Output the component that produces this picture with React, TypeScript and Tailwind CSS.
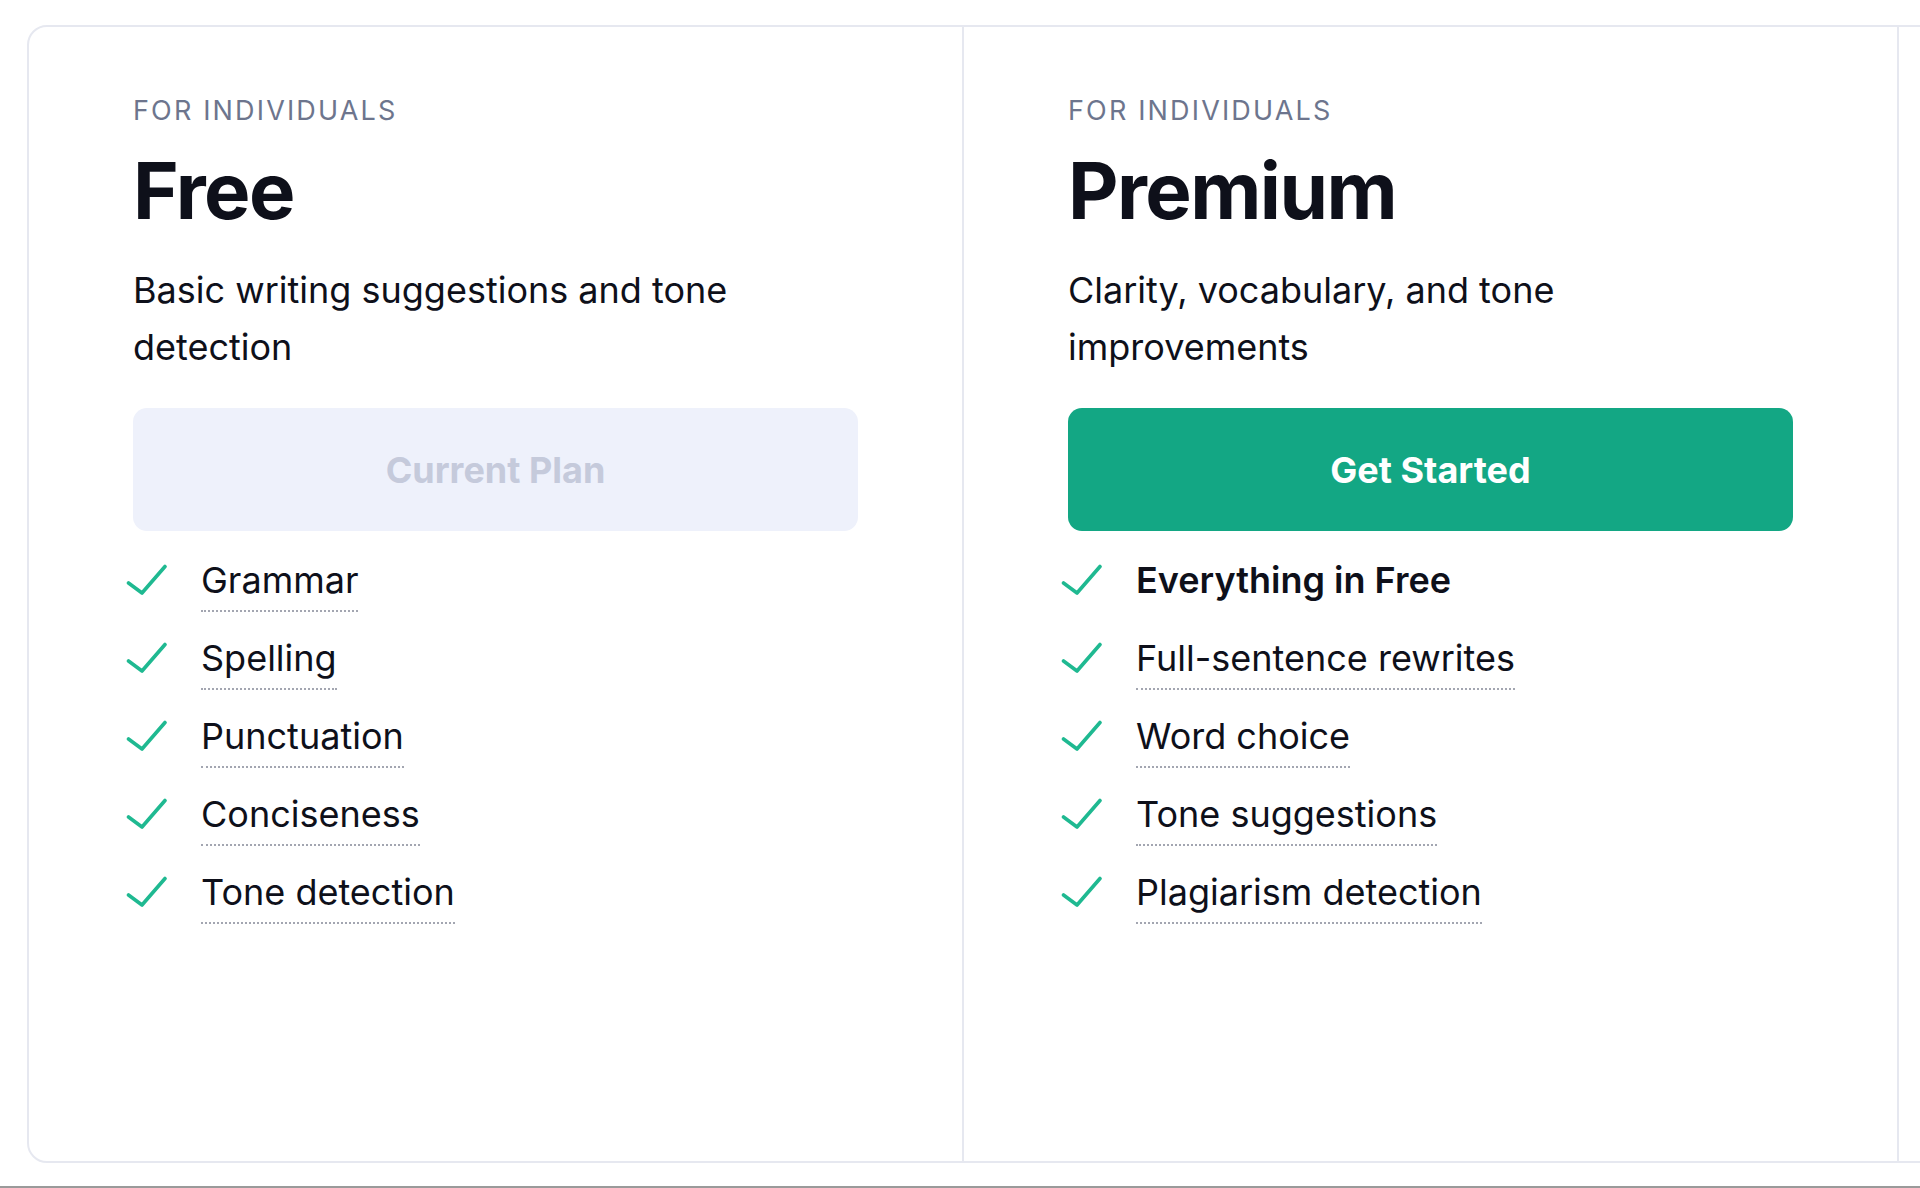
import React from "react";

type Plan = {
  label: string;
  name: string;
  blurb: string;
  cta: string;
  current?: boolean;
  features: Array<{ text: string; strong?: boolean }>;
};

const plans: Plan[] = [
  {
    label: "FOR INDIVIDUALS",
    name: "Free",
    blurb: "Basic writing suggestions and tone detection",
    cta: "Current Plan",
    current: true,
    features: [
      { text: "Grammar" },
      { text: "Spelling" },
      { text: "Punctuation" },
      { text: "Conciseness" },
      { text: "Tone detection" },
    ],
  },
  {
    label: "FOR INDIVIDUALS",
    name: "Premium",
    blurb: "Clarity, vocabulary, and tone improvements",
    cta: "Get Started",
    features: [
      { text: "Everything in Free", strong: true },
      { text: "Full-sentence rewrites" },
      { text: "Word choice" },
      { text: "Tone suggestions" },
      { text: "Plagiarism detection" },
    ],
  },
];

const Check = () => (
  <svg
    width="42"
    height="33"
    viewBox="0 0 42 33"
    fill="none"
    className="shrink-0 -ml-[7px] mt-[5px]"
  >
    <path
      d="M2.5 20 L16 30 L39 3.5"
      stroke="#1fb991"
      strokeWidth="3.6"
      strokeLinecap="round"
      strokeLinejoin="round"
    />
  </svg>
);

const PlanColumn = ({ plan, divider }: { plan: Plan; divider?: boolean }) => {
  return (
    <div
      className={
        "shrink-0 px-[104px] pt-[68px] " +
        (divider ? "w-[935px] border-l-2 border-[#e6e8f0]" : "w-[933px]")
      }
    >
      <p className="text-[27px] leading-[32px] tracking-[0.08em] text-[#6d758d]">
        {plan.label}
      </p>
      <h2 className="mt-[25px] text-[78px] leading-[78px] font-bold tracking-[-0.02em] text-[#0e101a]">
        {plan.name}
      </h2>
      <p className="mt-[32px] text-[36px] leading-[57px] text-[#0e101a]">
        {plan.blurb}
      </p>
      {plan.current ? (
        <button className="mt-[32px] h-[123px] w-full rounded-[14px] bg-[#eef1fb] text-[36px] font-bold text-[#c5cadb]">
          {plan.cta}
        </button>
      ) : (
        <button className="mt-[32px] h-[123px] w-full rounded-[14px] bg-[#13a784] text-[36px] font-bold text-white">
          {plan.cta}
        </button>
      )}
      <ul className="mt-[27px] flex flex-col gap-[24px]">
        {plan.features.map((f, i) => (
          <li key={i} className="flex items-start gap-[33px]">
            <Check />
            {f.strong ? (
              <span className="text-[36px] leading-[44px] font-semibold text-[#0e101a] pb-[10px]">
                {f.text}
              </span>
            ) : (
              <span className="inline-block text-[36px] leading-[44px] text-[#0e101a] pb-[8px] border-b-2 border-dotted border-[#a3a6b1]">
                {f.text}
              </span>
            )}
          </li>
        ))}
      </ul>
    </div>
  );
};

export default function App() {
  return (
    <div
      className="w-[1920px] h-[1188px] overflow-hidden bg-white border-b-2 border-[#9a9a9a]"
      style={{ fontFamily: "Inter, 'Noto Sans', sans-serif" }}
    >
      <div className="ml-[27px] mt-[25px] h-[1138px] w-[2860px] flex rounded-[20px] border-2 border-[#e6e8f0]">
        <PlanColumn plan={plans[0]} />
        <PlanColumn plan={plans[1]} divider />
        {/* business column sits off screen */}
        <div className="w-[935px] shrink-0 border-l-2 border-[#e6e8f0]" />
      </div>
    </div>
  );
}
